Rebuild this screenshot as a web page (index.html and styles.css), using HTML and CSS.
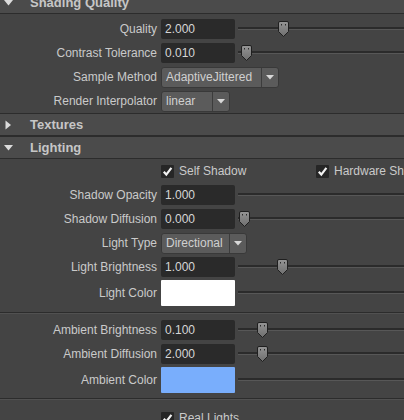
FILE: index.html
```html
<!DOCTYPE html>
<html>
<head>
<meta charset="utf-8">
<link rel="stylesheet" href="styles.css">
</head>
<body>
<div class="panel">
  <div class="head first">
    <svg class="tri" width="9" height="9" viewBox="0 0 9 9"><path d="M0 2 H9 L4.5 7.5 Z" fill="#dcdcdc"/></svg>
    <span class="title">Shading Quality</span>
  </div>
  <div class="body top">
    <div class="row">
      <span class="label">Quality</span>
      <div class="field">2.000</div>
      <div class="slider"><div class="track"></div><svg class="thumb" style="left:40px" width="11" height="16" viewBox="0 0 11 16"><defs><linearGradient id="g1" x1="0" y1="0" x2="0" y2="1"><stop offset="0" stop-color="#959595"/><stop offset="1" stop-color="#6e6e6e"/></linearGradient></defs><path d="M2 0.5 H9 Q10.5 0.5 10.5 2 V10.5 L5.5 15.5 L0.5 10.5 V2 Q0.5 0.5 2 0.5 Z" fill="url(#g1)" stroke="#1f1f1f"/><rect x="3" y="3" width="1" height="1.5" fill="#2a2a2a"/><rect x="7" y="3" width="1" height="1.5" fill="#2a2a2a"/></svg></div>
    </div>
    <div class="row">
      <span class="label">Contrast Tolerance</span>
      <div class="field">0.010</div>
      <div class="slider"><div class="track"></div><svg class="thumb" style="left:3px" width="11" height="16" viewBox="0 0 11 16"><path d="M2 0.5 H9 Q10.5 0.5 10.5 2 V10.5 L5.5 15.5 L0.5 10.5 V2 Q0.5 0.5 2 0.5 Z" fill="url(#g1)" stroke="#1f1f1f"/><rect x="3" y="3" width="1" height="1.5" fill="#2a2a2a"/><rect x="7" y="3" width="1" height="1.5" fill="#2a2a2a"/></svg></div>
    </div>
    <div class="row">
      <span class="label">Sample Method</span>
      <div class="drop w117"><span class="dtext">AdaptiveJittered</span><span class="darrow"><svg width="8" height="5" viewBox="0 0 8 5"><path d="M0 0 H8 L4 4.5 Z" fill="#d8d8d8"/></svg></span></div>
    </div>
    <div class="row">
      <span class="label">Render Interpolator</span>
      <div class="drop w68"><span class="dtext">linear</span><span class="darrow"><svg width="8" height="5" viewBox="0 0 8 5"><path d="M0 0 H8 L4 4.5 Z" fill="#d8d8d8"/></svg></span></div>
    </div>
  </div>
  <div class="head">
    <svg class="tri" width="9" height="10" viewBox="0 0 9 10"><path d="M1.5 0.5 L7 5 L1.5 9.5 Z" fill="#dcdcdc"/></svg>
    <span class="title">Textures</span>
  </div>
  <div class="head">
    <svg class="tri" width="9" height="9" viewBox="0 0 9 9"><path d="M0 2 H9 L4.5 7.5 Z" fill="#dcdcdc"/></svg>
    <span class="title">Lighting</span>
  </div>
  <div class="body">
    <div class="row">
      <span class="label"></span>
      <div class="checks">
        <span class="check w155"><svg class="box" width="13" height="13" viewBox="0 0 13 13"><rect width="13" height="13" rx="1" fill="#262626"/><path d="M2.8 6.8 L5.3 9.6 L10.4 2.8" fill="none" stroke="#f2f2f2" stroke-width="2.2"/></svg>Self Shadow</span>
        <span class="check"><svg class="box" width="13" height="13" viewBox="0 0 13 13"><rect width="13" height="13" rx="1" fill="#262626"/><path d="M2.8 6.8 L5.3 9.6 L10.4 2.8" fill="none" stroke="#f2f2f2" stroke-width="2.2"/></svg>Hardware Shadow</span>
      </div>
    </div>
    <div class="row">
      <span class="label">Shadow Opacity</span>
      <div class="field">1.000</div>
      <div class="slider"><div class="track"></div></div>
    </div>
    <div class="row">
      <span class="label">Shadow Diffusion</span>
      <div class="field">0.000</div>
      <div class="slider"><div class="track"></div><svg class="thumb" style="left:1px" width="11" height="16" viewBox="0 0 11 16"><path d="M2 0.5 H9 Q10.5 0.5 10.5 2 V10.5 L5.5 15.5 L0.5 10.5 V2 Q0.5 0.5 2 0.5 Z" fill="url(#g1)" stroke="#1f1f1f"/><rect x="3" y="3" width="1" height="1.5" fill="#2a2a2a"/><rect x="7" y="3" width="1" height="1.5" fill="#2a2a2a"/></svg></div>
    </div>
    <div class="row">
      <span class="label">Light Type</span>
      <div class="drop w85"><span class="dtext">Directional</span><span class="darrow"><svg width="8" height="5" viewBox="0 0 8 5"><path d="M0 0 H8 L4 4.5 Z" fill="#d8d8d8"/></svg></span></div>
    </div>
    <div class="row">
      <span class="label">Light Brightness</span>
      <div class="field">1.000</div>
      <div class="slider"><div class="track"></div><svg class="thumb" style="left:39px" width="11" height="16" viewBox="0 0 11 16"><path d="M2 0.5 H9 Q10.5 0.5 10.5 2 V10.5 L5.5 15.5 L0.5 10.5 V2 Q0.5 0.5 2 0.5 Z" fill="url(#g1)" stroke="#1f1f1f"/><rect x="3" y="3" width="1" height="1.5" fill="#2a2a2a"/><rect x="7" y="3" width="1" height="1.5" fill="#2a2a2a"/></svg></div>
    </div>
    <div class="row tall">
      <span class="label">Light Color</span>
      <div class="swatch white"></div>
      <div class="slider"><div class="track"></div></div>
    </div>
    <div class="sep sep1"></div>
    <div class="row">
      <span class="label">Ambient Brightness</span>
      <div class="field">0.100</div>
      <div class="slider"><div class="track"></div><svg class="thumb" style="left:19px" width="11" height="16" viewBox="0 0 11 16"><path d="M2 0.5 H9 Q10.5 0.5 10.5 2 V10.5 L5.5 15.5 L0.5 10.5 V2 Q0.5 0.5 2 0.5 Z" fill="url(#g1)" stroke="#1f1f1f"/><rect x="3" y="3" width="1" height="1.5" fill="#2a2a2a"/><rect x="7" y="3" width="1" height="1.5" fill="#2a2a2a"/></svg></div>
    </div>
    <div class="row">
      <span class="label">Ambient Diffusion</span>
      <div class="field">2.000</div>
      <div class="slider"><div class="track"></div><svg class="thumb" style="left:19px" width="11" height="16" viewBox="0 0 11 16"><path d="M2 0.5 H9 Q10.5 0.5 10.5 2 V10.5 L5.5 15.5 L0.5 10.5 V2 Q0.5 0.5 2 0.5 Z" fill="url(#g1)" stroke="#1f1f1f"/><rect x="3" y="3" width="1" height="1.5" fill="#2a2a2a"/><rect x="7" y="3" width="1" height="1.5" fill="#2a2a2a"/></svg></div>
    </div>
    <div class="row tall">
      <span class="label">Ambient Color</span>
      <div class="swatch blue"></div>
      <div class="slider"><div class="track"></div></div>
    </div>
    <div class="sep sep2"></div>
    <div class="row">
      <span class="label"></span>
      <div class="checks">
        <span class="check"><svg class="box" width="13" height="13" viewBox="0 0 13 13"><rect width="13" height="13" rx="1" fill="#262626"/><path d="M2.8 6.8 L5.3 9.6 L10.4 2.8" fill="none" stroke="#f2f2f2" stroke-width="2.2"/></svg>Real Lights</span>
      </div>
    </div>
  </div>
</div>
</body>
</html>
```

FILE: styles.css
```css
html, body {
  margin: 0;
  padding: 0;
  background: #444444;
  overflow: hidden;
}
.panel {
  width: 404px;
  height: 420px;
  overflow: hidden;
  font-family: "Liberation Sans", Arial, sans-serif;
  font-size: 12px;
  color: #c8c8c8;
}
.head {
  display: flex;
  align-items: center;
  height: 21px;
  background: #4b4b4b;
  border-top: 1px solid #2c2c2c;
  border-bottom: 1px solid #2c2c2c;
}
.head.first {
  margin-top: -8px;
  border-top: none;
}
.tri {
  margin-left: 4px;
  flex: none;
}
.title {
  margin-left: 17px;
  font-weight: bold;
  font-size: 13px;
  color: #c6c6c6;
}
.body {
  background: #444444;
}
.body.top {
  padding-top: 3px;
}
.row {
  display: grid;
  grid-template-columns: 161px 74px 1fr;
  align-items: center;
  height: 24px;
}
.row.tall {
  height: 28px;
}
.label {
  text-align: right;
  padding-right: 4px;
  white-space: nowrap;
  color: #cacaca;
}
.field {
  height: 20px;
  line-height: 20px;
  background: #2a2a2a;
  border-radius: 2px;
  padding-left: 4px;
  color: #d6d6d6;
}
.slider {
  position: relative;
  height: 16px;
  margin-left: 3px;
  display: flex;
  align-items: center;
}
.track {
  width: 100%;
  height: 2px;
  background: #2b2b2b;
  border-bottom: 1px solid #575757;
  margin-top: -2px;
}
.thumb {
  position: absolute;
  top: 0;
}
.drop {
  grid-column: 2 / 4;
  display: flex;
  height: 21px;
  background: #5b5b5b;
  border: 1px solid #393939;
  border-radius: 3px;
  box-sizing: border-box;
  color: #d0d0d0;
}
.w117 { width: 118px; }
.w68 { width: 69px; }
.w85 { width: 86px; }
.dtext {
  flex: 1;
  line-height: 19px;
  padding-left: 4px;
  white-space: nowrap;
  overflow: hidden;
}
.darrow {
  width: 16px;
  border-left: 1px solid #3c3c3c;
  display: flex;
  align-items: center;
  justify-content: center;
}
.swatch {
  height: 26px;
  border-radius: 1px;
}
.swatch.white { background: #ffffff; }
.swatch.blue { background: #79aefc; }
.sep {
  border-top: 1px solid #2c2c2c;
  border-bottom: 1px solid #515151;
}
.sep1 { margin: 5px 0 4px; }
.sep2 { margin: 4px 0 6px; }
.checks {
  grid-column: 2 / 4;
  display: flex;
  align-items: center;
  overflow: hidden;
}
.check {
  display: flex;
  align-items: center;
  flex: none;
  white-space: nowrap;
  color: #cacaca;
}
.check.w155 { width: 155px; }
.box {
  margin-right: 5px;
  flex: none;
}
```
